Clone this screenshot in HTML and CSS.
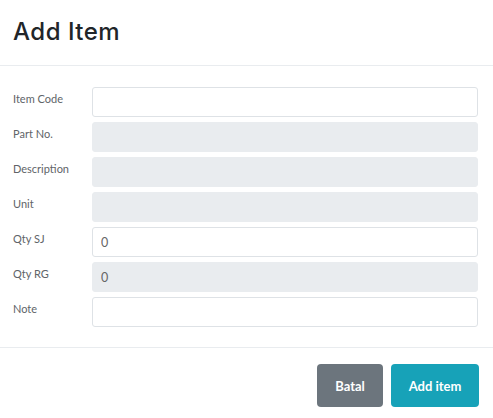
FILE: index.html
```html
<!DOCTYPE html>
<html>
<head>
<meta charset="utf-8">
<link rel="stylesheet" href="styles.css">
</head>
<body>
<div class="modal">
  <div class="modal-header">
    <h1 class="modal-title">Add Item</h1>
  </div>
  <div class="modal-body">
    <div class="form-row">
      <label class="form-label">Item Code</label>
      <input class="form-input" type="text" value="">
    </div>
    <div class="form-row">
      <label class="form-label">Part No.</label>
      <input class="form-input readonly" type="text" value="" readonly>
    </div>
    <div class="form-row">
      <label class="form-label">Description</label>
      <input class="form-input readonly" type="text" value="" readonly>
    </div>
    <div class="form-row">
      <label class="form-label">Unit</label>
      <input class="form-input readonly" type="text" value="" readonly>
    </div>
    <div class="form-row">
      <label class="form-label">Qty SJ</label>
      <input class="form-input" type="text" value="0">
    </div>
    <div class="form-row">
      <label class="form-label">Qty RG</label>
      <input class="form-input readonly" type="text" value="0" readonly>
    </div>
    <div class="form-row">
      <label class="form-label">Note</label>
      <input class="form-input" type="text" value="">
    </div>
  </div>
  <div class="modal-footer">
    <button class="btn btn-secondary">Batal</button>
    <button class="btn btn-info">Add item</button>
  </div>
</div>
</body>
</html>
```
FILE: styles.css
```css
* { box-sizing: border-box; }
html, body { margin: 0; padding: 0; background: #fff; }
body { font-family: Lato, "Liberation Sans", sans-serif; color: #495057; }
.modal { width: 493px; }
.modal-header {
  height: 66px;
  padding: 0 13px;
  display: flex;
  align-items: center;
  border-bottom: 1px solid #e9ecef;
}
.modal-title {
  margin: 0;
  font-family: Inter, "Open Sans", sans-serif;
  font-weight: 500;
  font-size: 24px;
  color: #212529;
  letter-spacing: 0.5px;
  position: relative;
  top: -1px;
}
.modal-body {
  padding: 21px 15px 20px 13px;
  display: flex;
  flex-direction: column;
  gap: 5px;
}
.form-row {
  display: flex;
  align-items: flex-start;
}
.form-label {
  width: 79px;
  flex: none;
  font-size: 11px;
  line-height: 16px;
  padding-top: 4px;
  color: #606468;
  font-weight: 400;
}
.form-input {
  flex: 1;
  height: 30px;
  border: 1px solid #dee2e6;
  border-radius: 3px;
  padding: 0 8px;
  font-family: Lato, sans-serif;
  font-size: 12.5px;
  color: #666;
  background: #fff;
  outline: none;
}
.form-input.readonly { background: #e9ecef; border-color: #e9ecef; }
.modal-footer {
  border-top: 1px solid #e9ecef;
  display: flex;
  justify-content: flex-end;
  gap: 8px;
  padding: 16px 14px 10px;
}
.btn {
  height: 43px;
  border: none;
  border-radius: 4px;
  color: #fff;
  font-family: Lato, sans-serif;
  font-size: 13px;
  font-weight: 700;
  padding: 0;
}
.btn-secondary { background: #6c757d; width: 66px; }
.btn-info { background: #17a2b8; width: 88px; }
```
